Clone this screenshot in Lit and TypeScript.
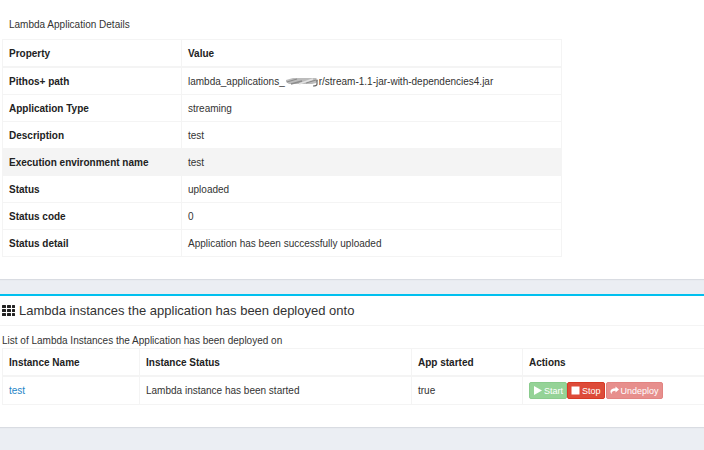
import { LitElement, html, css, svg } from "lit";
import { customElement } from "lit/decorators.js";

const smudge = html`<svg class="smudge" viewBox="0 0 34 12" role="img" aria-label="hidden name">
  <defs>
    <filter id="soft" x="-10%" y="-30%" width="120%" height="160%"><feGaussianBlur stdDeviation="0.7" /></filter>
  </defs>
  <g filter="url(#soft)">
    <path d="M1 4 L8 2 L31 2 L33 4 L31 7 L27 8 L4 8 L1 6Z" fill="#bcbcbc" />
    <path d="M2 6 L12 3 M6 8 L17 5 M21 7 L31 4" stroke="#8c8c8c" stroke-width="1.3" fill="none" />
    <path d="M14 8 L28 3" stroke="#e2e2e2" stroke-width="1.5" />
    <path d="M32 4 V8 Q32 10 28 10" stroke="#666" stroke-width="1.2" fill="none" />
  </g>
</svg>`;

const properties: { name: string; value: unknown; active?: boolean }[] = [
  { name: "Pithos+ path", value: html`lambda_applications_${smudge}r/stream-1.1-jar-with-dependencies4.jar` },
  { name: "Application Type", value: "streaming" },
  { name: "Description", value: "test" },
  { name: "Execution environment name", value: "test", active: true },
  { name: "Status", value: "uploaded" },
  { name: "Status code", value: "0" },
  { name: "Status detail", value: "Application has been successfully uploaded" },
];

@customElement("app-root")
export class AppRoot extends LitElement {
  static styles = css`
    :host {
      display: block;
      min-height: 100vh;
      overflow-x: hidden;
      background: #ebeef3;
      color: #333;
      font: 10px/16px "Liberation Sans", Arial, sans-serif;
    }
    .box {
      background: #fff;
      box-shadow: 0 1px 1px #d9dce2;
      padding-left: 2px;
    }
    .details {
      padding-top: 17px;
      padding-bottom: 22px;
    }
    .instances {
      margin-top: 15px;
      border-top: 2px solid #00c0ef;
      padding-bottom: 22px;
    }
    .caption {
      margin: 0 0 6px;
      padding-left: 7px;
      font-size: 10px;
      font-weight: normal;
    }
    .title {
      display: flex;
      align-items: center;
      gap: 4px;
      margin: 0 0 0 -2px;
      padding-left: 2px;
      height: 29px;
      border-bottom: 1px solid #f4f4f4;
      font-size: 13px;
      font-weight: normal;
    }
    .grid-icon {
      width: 13px;
      height: 11px;
      fill: #222;
    }
    .intro {
      margin: 0;
      padding-top: 7px;
      line-height: 15px;
    }
    table {
      border-collapse: separate;
      border-spacing: 0;
      table-layout: fixed;
      width: 100%;
      border: solid #f4f4f4;
      border-width: 1px 0 0 1px;
    }
    .property-table {
      max-width: 560px;
    }
    .property-col {
      width: 179px;
    }
    .name-col {
      width: 137px;
    }
    .status-col {
      width: 272px;
    }
    .started-col {
      width: 111px;
    }
    th,
    td {
      box-sizing: border-box;
      height: 27px;
      padding: 2px 6px 0;
      border: solid #f4f4f4;
      border-width: 0 1px 1px 0;
      text-align: left;
      white-space: nowrap;
    }
    th {
      color: #222;
    }
    thead th {
      height: 28px;
      border-bottom-width: 2px;
    }
    .instance-table td {
      height: 28px;
      padding-top: 0;
    }
    .instance-table th:last-child,
    .instance-table td:last-child {
      border-right: 0;
    }
    .active > * {
      background: #f4f4f4;
    }
    .smudge {
      width: 34px;
      height: 12px;
      vertical-align: -3px;
    }
    a {
      color: #2585c7;
      text-decoration: none;
    }
    .actions {
      display: flex;
    }
    button {
      display: flex;
      align-items: center;
      gap: 2px;
      box-sizing: border-box;
      height: 17px;
      padding: 0 3px;
      border: 1px solid;
      border-radius: 2px;
      color: #fff;
      font: 9px/14px "Liberation Sans", Arial, sans-serif;
    }
    button svg {
      width: 9px;
      height: 9px;
      fill: #fff;
    }
    .start {
      background: #95d397;
      border-color: #8acb8d;
    }
    .stop {
      background: #dd4b39;
      border-color: #d73925;
    }
    .undeploy {
      margin-left: 1px;
      background: #e78f8d;
      border-color: #e28482;
    }
  `;

  render() {
    return html`
      <section class="box details">
        <h2 class="caption">Lambda Application Details</h2>
        <table class="property-table">
          <colgroup><col class="property-col" /><col /></colgroup>
          <thead>
            <tr><th scope="col">Property</th><th scope="col">Value</th></tr>
          </thead>
          <tbody>
            ${properties.map(
              (p) => html`<tr class=${p.active ? "active" : ""}><th scope="row">${p.name}</th><td>${p.value}</td></tr>`
            )}
          </tbody>
        </table>
      </section>
      <section class="box instances">
        <h2 class="title">
          <svg class="grid-icon" viewBox="0 0 13 11" aria-hidden="true">
            ${[0, 4, 8].map((y) => [0, 5, 10].map((x) => svg`<rect x=${x} y=${y} width=${x === 10 ? 3 : 4} height="3" rx="0.5" />`))}
          </svg>
          Lambda instances the application has been deployed onto
        </h2>
        <p class="intro">List of Lambda Instances the Application has been deployed on</p>
        <table class="instance-table">
          <colgroup><col class="name-col" /><col class="status-col" /><col class="started-col" /><col /></colgroup>
          <thead>
            <tr>
              <th scope="col">Instance Name</th>
              <th scope="col">Instance Status</th>
              <th scope="col">App started</th>
              <th scope="col">Actions</th>
            </tr>
          </thead>
          <tbody>
            <tr>
              <td><a href="#test">test</a></td>
              <td>Lambda instance has been started</td>
              <td>true</td>
              <td>
                <div class="actions">
                  <button class="start" type="button" disabled>
                    <svg viewBox="0 0 9 9" aria-hidden="true"><path d="M1 0 L9 4.5 L1 9Z" /></svg>Start
                  </button>
                  <button class="stop" type="button">
                    <svg viewBox="0 0 9 9" aria-hidden="true"><path d="M0.5 0.5H8.5V8.5H0.5Z" /></svg>Stop
                  </button>
                  <button class="undeploy" type="button" disabled>
                    <svg viewBox="0 0 9 9" aria-hidden="true">
                      <path d="M5.5 0.5 L9 3.5 L5.5 6.5 V4.8 C3 4.8 1.6 5.4 1.5 8.2 C-0.8 5 0.6 2.3 5.5 2.2Z" />
                    </svg>Undeploy
                  </button>
                </div>
              </td>
            </tr>
          </tbody>
        </table>
      </section>
    `;
  }
}
